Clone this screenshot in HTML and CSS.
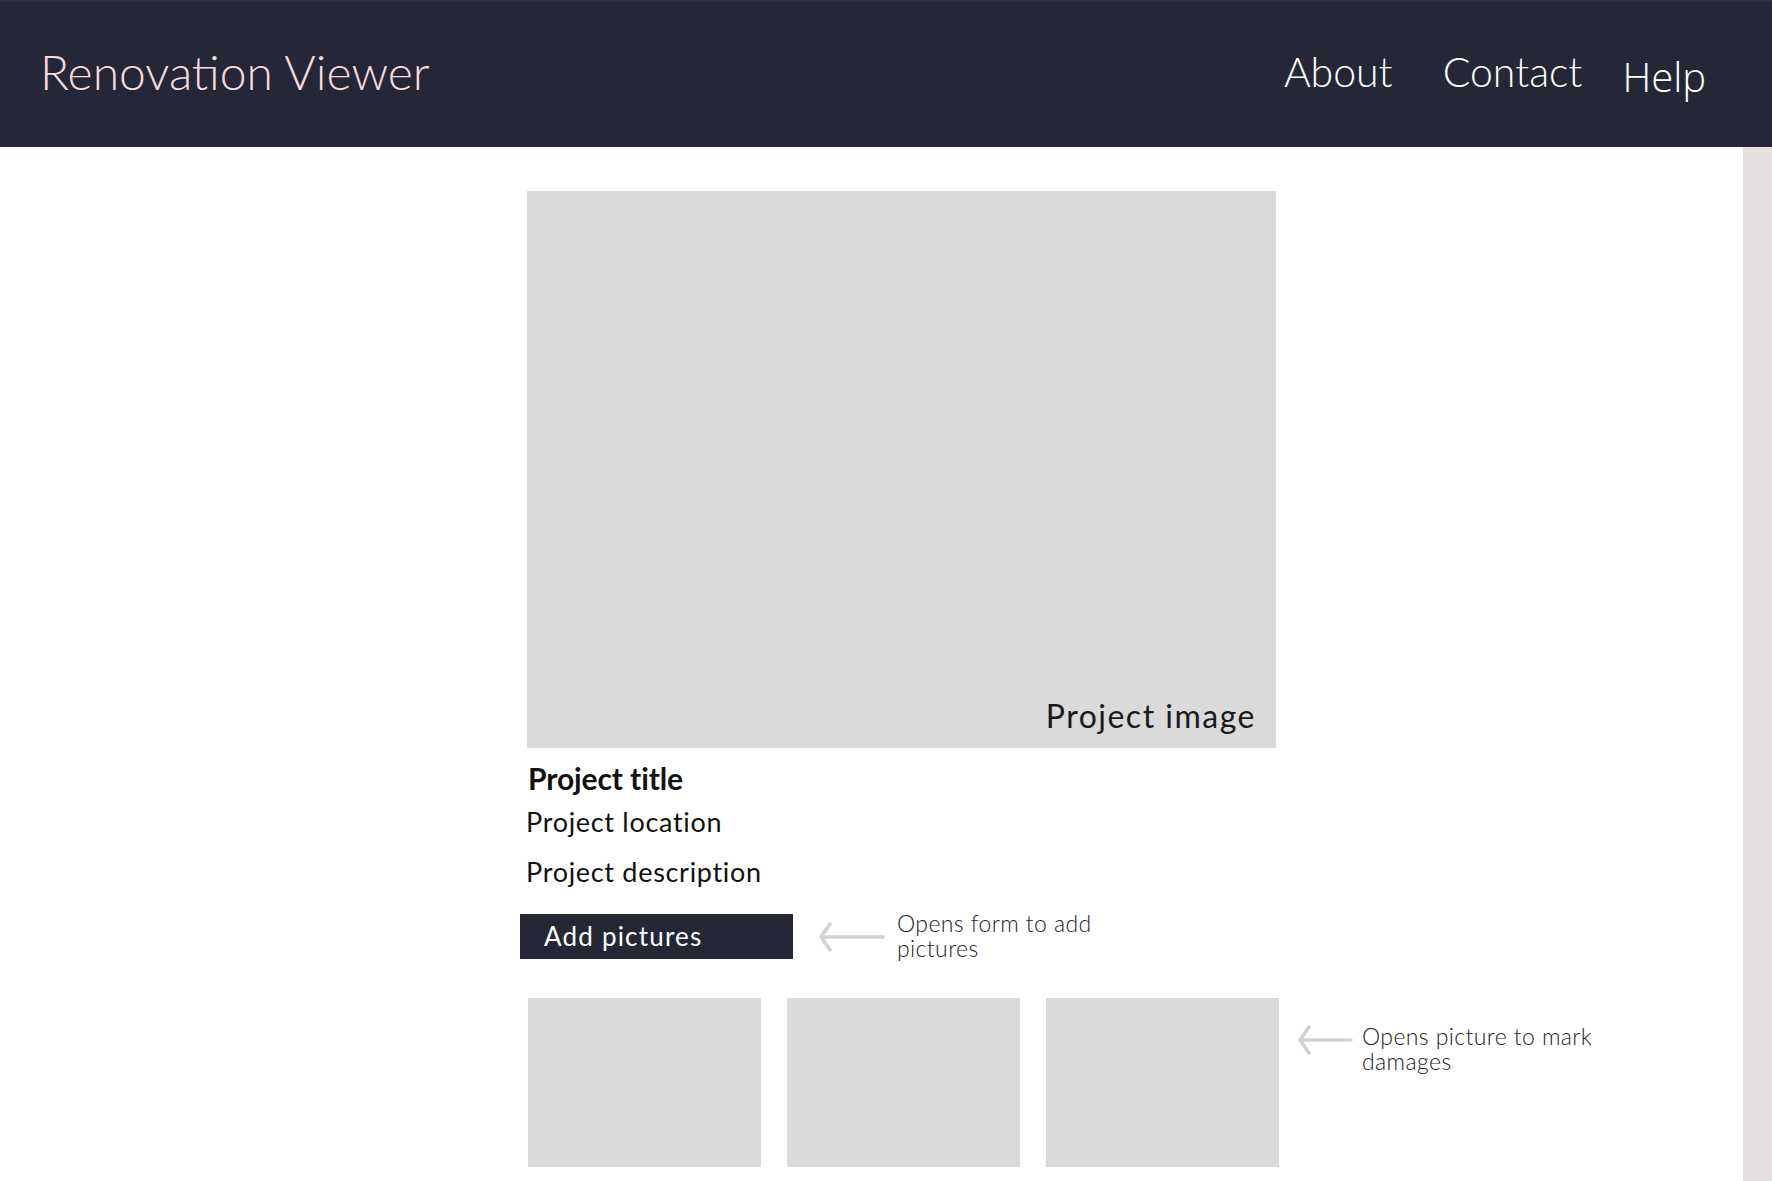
FILE: index.html
```html
<!DOCTYPE html>
<html>
<head>
<meta charset="utf-8">
<title>Renovation Viewer</title>
<link rel="stylesheet" href="styles.css">
</head>
<body>
<header class="topbar">
  <div class="brand">Renovation Viewer</div>
  <nav class="nav">
    <a class="nav-link">About</a>
    <a class="nav-link">Contact</a>
    <a class="nav-link nav-help">Help</a>
  </nav>
</header>
<div class="page">
  <main class="content">
    <div class="hero"><span class="hero-label">Project image</span></div>
    <h1 class="project-title">Project title</h1>
    <p class="project-line loc">Project location</p>
    <p class="project-line desc">Project description</p>
    <div class="action-row">
      <button class="add-btn">Add pictures</button>
      <div class="note note-btn">
        <svg class="arrow" width="70" height="30" viewBox="0 0 70 30"><path d="M7 15 H68 M15 2 L6 15 L15 28" fill="none" stroke="#d2d2d2" stroke-width="3.5" stroke-linecap="round" stroke-linejoin="round"/></svg>
        <span class="note-text">Opens form to add<br>pictures</span>
      </div>
    </div>
    <div class="thumb-row">
      <div class="thumb"></div>
      <div class="thumb"></div>
      <div class="thumb"></div>
      <div class="note note-thumb">
        <svg class="arrow" width="58" height="34" viewBox="0 0 58 34"><path d="M7 17 H56 M14 4 L5 17 L14 30" fill="none" stroke="#d2d2d2" stroke-width="3.5" stroke-linecap="round" stroke-linejoin="round"/></svg>
        <span class="note-text">Opens picture to mark<br>damages</span>
      </div>
    </div>
  </main>
  <aside class="side-strip"></aside>
</div>
</body>
</html>
```
FILE: styles.css
```css
html, body {
  margin: 0;
  padding: 0;
  background: #ffffff;
}
body {
  font-family: "Lato", "Open Sans", sans-serif;
  color: #111111;
  height: 1181px;
  overflow: hidden;
  display: flex;
  flex-direction: column;
}
.topbar {
  height: 147px;
  flex: none;
  background: #252737;
  border-top: 2px solid #2f3142;
  box-sizing: border-box;
  display: flex;
  align-items: center;
  justify-content: space-between;
  padding: 0 66px 0 40px;
}
.brand {
  font-family: "Lato", sans-serif;
  font-weight: 300;
  font-size: 48px;
  color: #f4dcdc;
  margin-top: -6px;
}
.nav {
  display: flex;
  align-items: baseline;
  margin-top: -6px;
}
.nav-link {
  font-family: "Lato", sans-serif;
  font-weight: 300;
  font-size: 41px;
  color: #ffffff;
  margin-left: 50px;
}
.nav-help {
  margin-left: 40px;
  font-family: "Open Sans", sans-serif;
  font-weight: 300;
  font-size: 40px;
  position: relative;
  top: 5px;
}
.page {
  flex: 1;
  display: flex;
}
.content {
  flex: 1;
  padding: 44px 0 0 527px;
}
.side-strip {
  width: 29px;
  flex: none;
  background: #e3e0df;
}
.hero {
  width: 749px;
  height: 557px;
  background: #dadada;
  display: flex;
  align-items: flex-end;
  justify-content: flex-end;
  box-sizing: border-box;
  padding: 0 20px 13px 0;
}
.hero-label {
  font-size: 32px;
  line-height: 38px;
  letter-spacing: 1.5px;
  color: #1a1a1a;
}
.project-title {
  margin: 12px 0 0 1px;
  font-size: 30px;
  line-height: 36px;
  font-weight: 700;
  letter-spacing: -0.1px;
}
.project-line {
  margin: 9px 0 0 -1px;
  font-size: 27px;
  line-height: 34px;
  letter-spacing: 0.7px;
}
.project-line.desc {
  margin-top: 16px;
}
.action-row {
  margin: 25px 0 0 -7px;
  display: flex;
  align-items: flex-start;
}
.add-btn {
  width: 273px;
  height: 45px;
  background: #252737;
  color: #ffffff;
  border: none;
  margin: 0;
  padding: 0 0 0 24px;
  text-align: left;
  font-family: "Lato", sans-serif;
  font-size: 26px;
  line-height: 45px;
  letter-spacing: 1.2px;
}
.note {
  display: flex;
  align-items: flex-start;
}
.note-btn {
  margin-left: 22px;
}
.note-btn .arrow {
  margin-top: 8px;
}
.note-text {
  font-size: 23px;
  line-height: 25px;
  font-weight: 300;
  letter-spacing: 0.4px;
  color: #222222;
  margin-left: 12px;
  margin-top: -3px;
}
.thumb-row {
  margin: 37px 0 0 1px;
  display: flex;
  align-items: flex-start;
  gap: 26px;
}
.thumb {
  width: 233px;
  height: 169px;
  background: #dadada;
  flex: none;
}
.note-thumb {
  margin-left: -10px;
  margin-top: 25px;
}
.note-thumb .note-text {
  margin-left: 9px;
  margin-top: 1px;
}
```
